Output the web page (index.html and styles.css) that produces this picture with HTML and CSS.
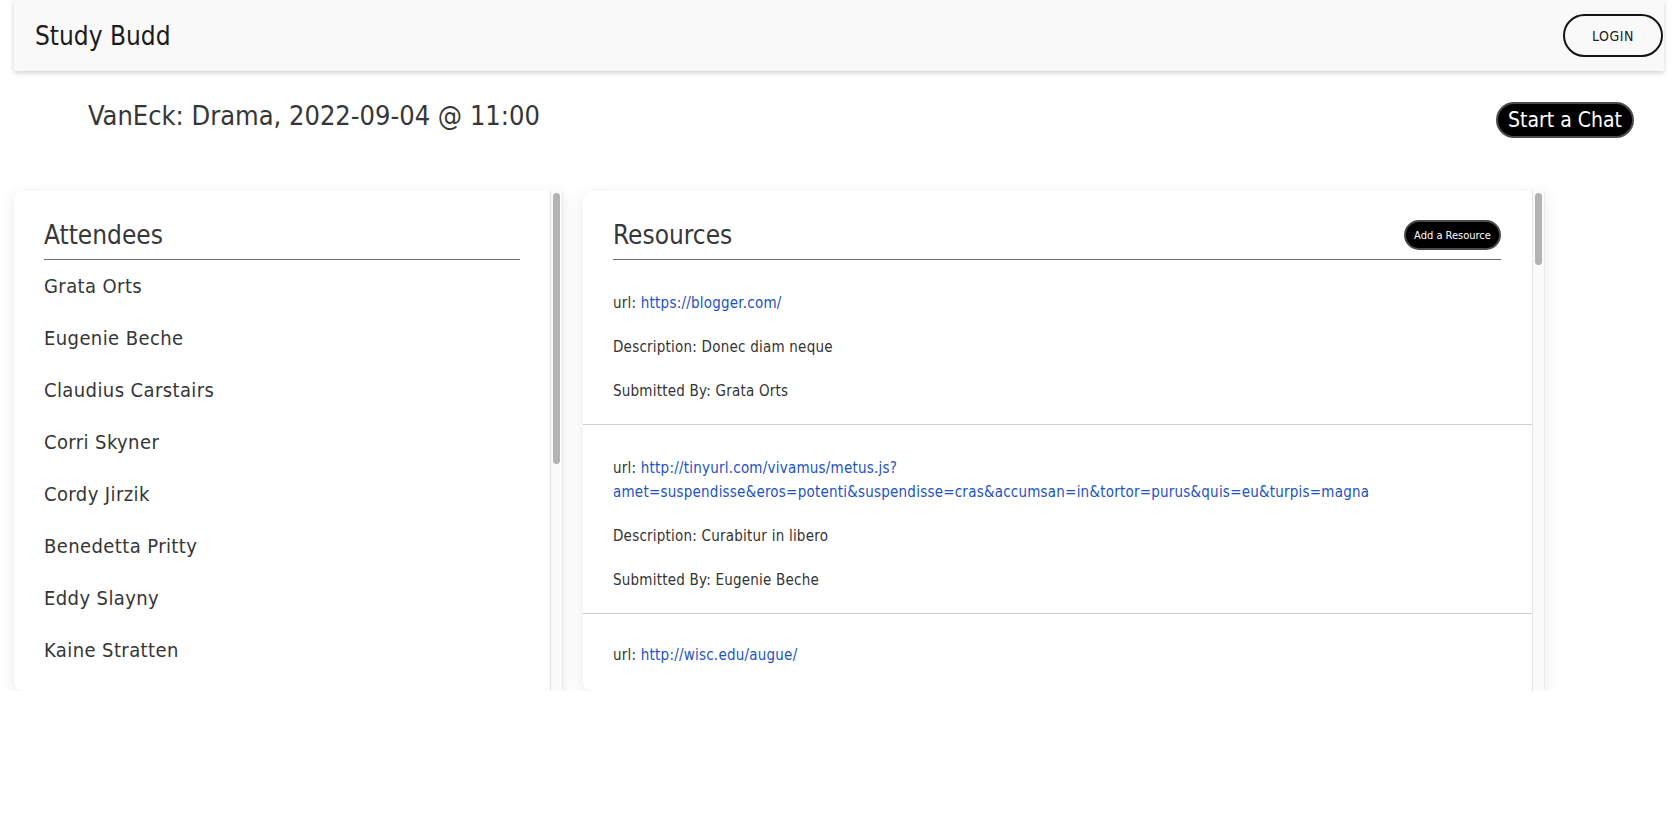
FILE: index.html
```html
<!DOCTYPE html>
<html lang="en">
<head>
<meta charset="utf-8">
<title>Study Budd</title>
<link rel="stylesheet" href="styles.css">
</head>
<body>
<header class="navbar">
  <span class="brand">Study Budd</span>
  <button class="login-btn">Login</button>
</header>

<section class="event-bar">
  <h1 class="event-title">VanEck: Drama, 2022-09-04 @ 11:00</h1>
  <button class="chat-btn">Start a Chat</button>
</section>

<main class="panels">
  <section class="card attendees">
    <div class="card-body">
      <div class="card-head">
        <h2 class="card-title">Attendees</h2>
      </div>
      <ul class="name-list">
        <li>Grata Orts</li>
        <li>Eugenie Beche</li>
        <li>Claudius Carstairs</li>
        <li>Corri Skyner</li>
        <li>Cordy Jirzik</li>
        <li>Benedetta Pritty</li>
        <li>Eddy Slayny</li>
        <li>Kaine Stratten</li>
      </ul>
    </div>
    <div class="scroll-track"><div class="scroll-thumb thumb-attendees"></div></div>
  </section>

  <section class="card resources">
    <div class="card-body">
      <div class="card-head res-head">
        <h2 class="card-title">Resources</h2>
        <button class="add-btn">Add a Resource</button>
      </div>
      <ul class="res-list">
        <li class="res-item"><p>url: <a href="#">https://blogger.com/</a></p><p>Description: Donec diam neque</p><p>Submitted By: Grata Orts</p></li>
        <li class="res-item"><p>url: <a href="#">http://tinyurl.com/vivamus/metus.js?amet=suspendisse&amp;eros=potenti&amp;suspendisse=cras&amp;accumsan=in&amp;tortor=purus&amp;quis=eu&amp;turpis=magna</a></p><p>Description: Curabitur in libero</p><p>Submitted By: Eugenie Beche</p></li>
        <li class="res-item res-last"><p>url: <a href="#">http://wisc.edu/augue/</a></p></li>
      </ul>
    </div>
    <div class="scroll-track"><div class="scroll-thumb thumb-resources"></div></div>
  </section>
</main>
</body>
</html>
```

FILE: styles.css
```css
* { box-sizing: border-box; }

html, body {
  margin: 0;
  padding: 0;
  background: #ffffff;
}

body {
  font-family: "DejaVu Sans Condensed", "Liberation Sans", sans-serif;
  color: #333333;
}

button {
  font-family: inherit;
  cursor: pointer;
}

/* ---------- navbar ---------- */
.navbar {
  height: 71px;
  margin: 0 15px 0 14px;
  padding: 0 1px 0 21px;
  background: #f9f9f9;
  box-shadow: 0 2px 5px rgba(0, 0, 0, 0.18);
  display: flex;
  align-items: center;
  justify-content: space-between;
}

.brand {
  font-size: 26px;
  color: #1c1c1c;
}

.login-btn {
  width: 100px;
  height: 43px;
  border: 2px solid #141414;
  border-radius: 22px;
  background: transparent;
  color: #222;
  font-size: 14px;
  text-transform: uppercase;
  letter-spacing: 0.04em;
  padding: 0;
}

/* ---------- event bar ---------- */
.event-bar {
  display: flex;
  justify-content: space-between;
  align-items: flex-start;
  padding: 0 45px 0 88px;
}

.event-title {
  margin: 28px 0 0;
  font-size: 27px;
  line-height: 34px;
  font-weight: normal;
  color: #363636;
}

.chat-btn {
  margin-top: 31px;
  width: 138px;
  height: 36px;
  border: 2px solid #4a4a4a;
  border-radius: 19px;
  background: #000;
  color: #fff;
  font-size: 21px;
  white-space: nowrap;
  padding: 0;
}

/* ---------- panels ---------- */
.panels {
  display: flex;
  align-items: flex-start;
  gap: 20px;
  margin-top: 53px;
  padding-left: 14px;
}

.card {
  height: 500px;
  display: flex;
  overflow: hidden;
  background: #fff;
  border-radius: 9px 2px 2px 9px;
  box-shadow: 0 4px 16px rgba(0, 0, 0, 0.09);
}

.card-body {
  flex: 1;
  min-width: 0;
  overflow: hidden;
}

.scroll-track {
  width: 13px;
  flex: none;
  background: #fafafa;
  border-left: 1px solid #e4e4e4;
  border-right: 1px solid #ececec;
  padding: 2px 2px 0 2px;
}

.scroll-thumb {
  background: #b3b3b3;
  border-radius: 4px;
}

.thumb-attendees { height: 271px; }
.thumb-resources { height: 72px; }

.attendees { width: 549px; }
.resources { width: 962px; }

.card-head {
  padding-top: 28px;
  margin: 0 30px;
  border-bottom: 1px solid #6e6e6e;
  padding-bottom: 8px;
}

.res-head {
  display: flex;
  align-items: center;
  justify-content: space-between;
  margin-right: 31px;
}

.card-title {
  margin: 0;
  font-size: 26px;
  line-height: 32px;
  font-weight: normal;
  color: #383838;
}

.add-btn {
  width: 97px;
  height: 30px;
  border: 2px solid #4a4a4a;
  border-radius: 15px;
  background: #000;
  color: #fff;
  font-size: 11px;
  white-space: nowrap;
  padding: 0;
}

/* ---------- attendees ---------- */
.name-list {
  list-style: none;
  margin: 11px 0 0;
  padding: 0 30px 28px;
}

.name-list li {
  font-size: 20px;
  line-height: 30px;
  margin-bottom: 22px;
  letter-spacing: 0.02em;
  color: #363636;
}

/* ---------- resources ---------- */
.res-list {
  list-style: none;
  margin: 0;
  padding: 0;
}

.res-item {
  padding: 11px 30px 1px;
  border-bottom: 1px solid #cfcfcf;
}

.res-last {
  padding-top: 9px;
  border-bottom: none;
}

.res-item p {
  margin: 20px 0;
  font-size: 15px;
  line-height: 24px;
  letter-spacing: 0.015em;
  color: #333;
}

.res-item a {
  color: #2152c4;
  text-decoration: none;
}
```
